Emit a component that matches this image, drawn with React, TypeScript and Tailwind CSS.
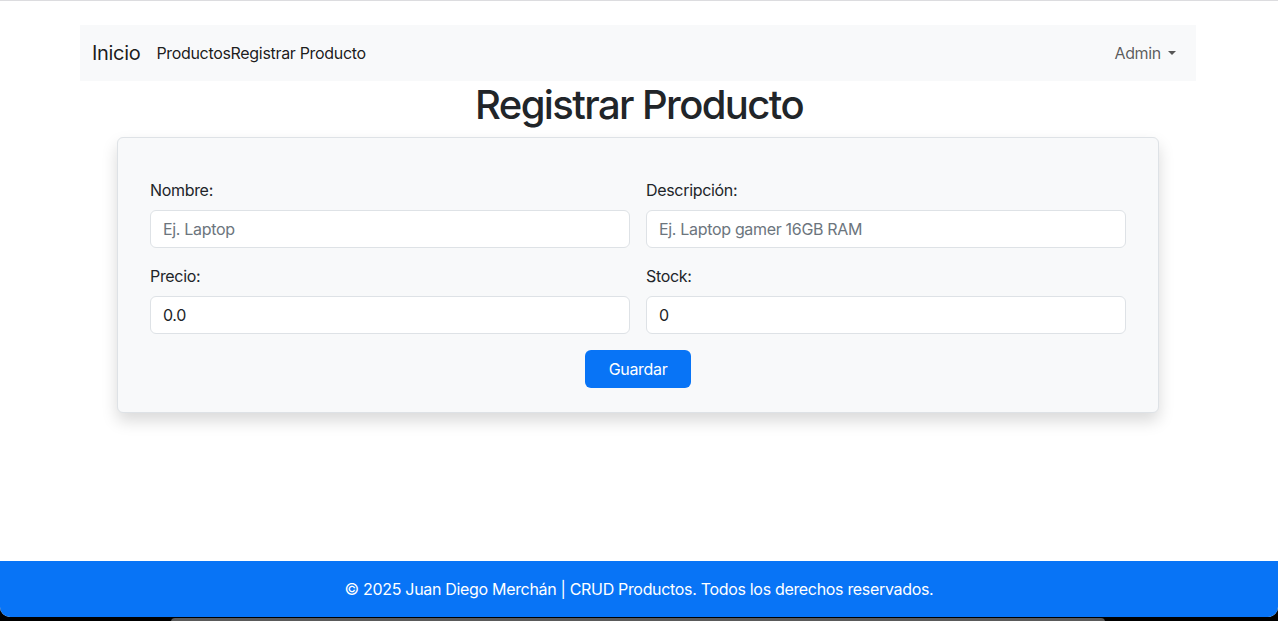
import { useState } from "react";

const font = { fontFamily: "Inter, 'Noto Sans', 'Liberation Sans', sans-serif" };

function Field({ label, value, placeholder, onChange, type = "text" }: { label: string; value: string; placeholder?: string; onChange: (v: string) => void; type?: string }) {
  return (
    <div className="flex flex-col">
      <label className="text-[16px] leading-6 text-[#212529] mb-2">{label}</label>
      <input
        type={type}
        value={value}
        placeholder={placeholder}
        onChange={(e) => onChange(e.target.value)}
        className="h-[38px] w-full bg-white border border-[#dee2e6] rounded-md px-3 text-[16px] tracking-[-0.02em] text-[#212529] placeholder-[#6c757d] focus:outline-none"
      />
    </div>
  );
}

export default function App() {
  const [nombre, setNombre] = useState("");
  const [descripcion, setDescripcion] = useState("");
  const [precio, setPrecio] = useState("0.0");
  const [stock, setStock] = useState("0");

  return (
    <div className="h-[621px] bg-black flex flex-col overflow-hidden tracking-[-0.02em]" style={font}>
      <div className="flex-1 flex flex-col bg-white rounded-b-[10px] overflow-hidden">
        <div className="h-px bg-[#dcdcdf]" />

        <nav className="mt-6 ml-[80px] w-[1116px] h-[56px] bg-[#f8f9fa] flex items-center justify-between px-3">
          <div className="flex items-center">
            <a className="text-[20px] text-black/90 mr-4 leading-[30px]">Inicio</a>
            <a className="text-[16px] text-black/90">Productos</a>
            <a className="text-[16px] text-black/90">Registrar Producto</a>
          </div>
          <button className="flex items-center text-[16px] text-black/65 pr-2 tracking-[-0.02em]">
            Admin
            <span className="ml-[7px] w-0 h-0 border-l-[4px] border-r-[4px] border-t-[4px] border-l-transparent border-r-transparent border-t-black/65" />
          </button>
        </nav>

        <main className="flex-1 flex flex-col">
          <h1 className="self-center text-[40px] leading-[48px] font-medium tracking-[-0.04em] text-[#212529] mb-2">Registrar Producto</h1>
          <form
            onSubmit={(e) => e.preventDefault()}
            className="ml-[117px] w-[1042px] bg-[#f8f9fa] border border-[#dee2e6] rounded-md shadow-[0_8px_16px_rgba(0,0,0,0.15)] pt-10 px-8 pb-6"
          >
            <div className="grid grid-cols-2 gap-x-4 gap-y-4">
              <Field label="Nombre:" value={nombre} placeholder="Ej. Laptop" onChange={setNombre} />
              <Field label="Descripción:" value={descripcion} placeholder="Ej. Laptop gamer 16GB RAM" onChange={setDescripcion} />
              <Field label="Precio:" value={precio} onChange={setPrecio} />
              <Field label="Stock:" value={stock} onChange={setStock} />
            </div>
            <div className="flex justify-center mt-4">
              <button type="submit" className="h-[38px] px-6 rounded-md bg-[#0874f6] text-white text-[16px] tracking-[-0.02em]">Guardar</button>
            </div>
          </form>
        </main>

        <footer className="h-[56px] bg-[#0874f6] flex items-center justify-center text-white text-[16px]">
          © 2025 Juan Diego Merchán | CRUD Productos. Todos los derechos reservados.
        </footer>
      </div>
      <div className="h-[4px] flex justify-start">
        <div className="ml-[171px] w-[934px] h-[4px] mt-[1px] bg-[#5a5a5a] rounded-t-md" />
      </div>
    </div>
  );
}
